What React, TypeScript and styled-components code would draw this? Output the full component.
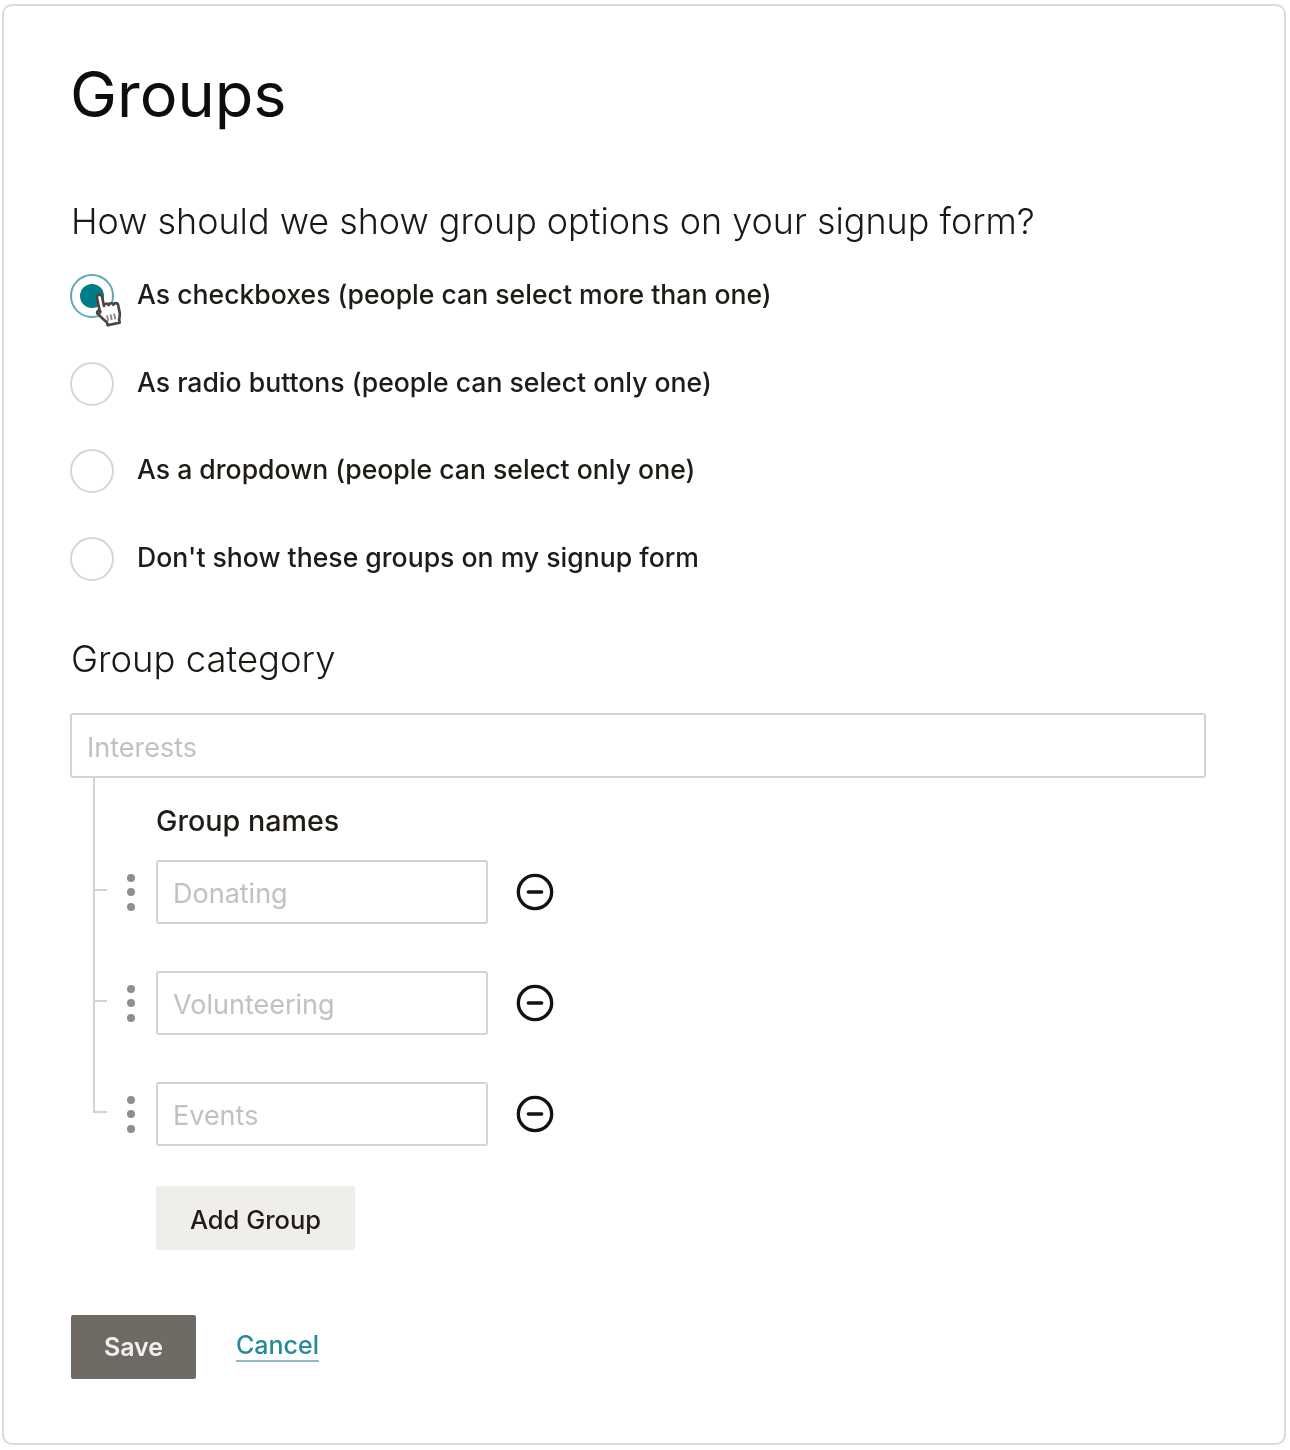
import React from "react";
import styled, { createGlobalStyle } from "styled-components";
import { CircleMinus } from "lucide-react";

const GlobalStyle = createGlobalStyle`
  html, body {
    margin: 0;
    padding: 0;
    background: #fff;
  }
  body {
    font-family: "Inter", "Liberation Sans", sans-serif;
    color: #241c15;
  }
`;

const Card = styled.main`
  box-sizing: border-box;
  width: 1284px;
  height: 1441px;
  margin: 4px 0 0 2px;
  padding: 53px 0 0 66px;
  background: #fff;
  border: 2px solid #dedbd6;
  border-radius: 10px;
  filter: blur(0.6px);
`;

const Title = styled.h1`
  margin: 0 0 70px 0;
  font-size: 63px;
  line-height: 70px;
  font-weight: 400;
  color: #0f0c0a;
`;

const SectionTitle = styled.h2<{ $size: number; $gap: number }>`
  margin: 0 0 ${(p) => p.$gap}px 1px;
  font-size: ${(p) => p.$size}px;
  line-height: 44px;
  font-weight: 300;
  color: #1c1814;
`;

const Options = styled.div`
  display: flex;
  flex-direction: column;
  gap: 43.7px;
  margin-bottom: 56px;
`;

const Option = styled.label`
  display: flex;
  align-items: center;
  gap: 23px;
  height: 44px;
  font-size: 26.6px;
  font-weight: 500;
  color: #1f1b17;
`;

const OptionText = styled.span`
  margin-top: -4px;
`;

const Radio = styled.span<{ $checked?: boolean }>`
  position: relative;
  box-sizing: border-box;
  display: flex;
  align-items: center;
  justify-content: center;
  width: 44px;
  height: 44px;
  border-radius: 50%;
  background: #fff;
  border: 2.5px solid ${(p) => (p.$checked ? "#5fa9b5" : "#d8d6d2")};
`;

const RadioDot = styled.span`
  width: 24px;
  height: 24px;
  border-radius: 50%;
  background: #007c89;
`;

const HandCursor = styled.svg`
  position: absolute;
  left: 23px;
  top: 15px;
  width: 29px;
  height: 37px;
  transform: rotate(-12deg);
`;

const TextInput = styled.input<{ $width: number }>`
  box-sizing: border-box;
  display: block;
  width: ${(p) => p.$width}px;
  height: 64px;
  padding: 3px 15px 0;
  background: #fff;
  border: 2px solid #d5d3cf;
  border-radius: 3px;
  font-family: inherit;
  font-size: 27px;
  &::placeholder {
    color: #c2c1be;
    opacity: 1;
  }
`;

const CategoryInput = styled(TextInput)`
  height: 65px;
`;

const Tree = styled.div`
  margin-left: 23px;
`;

const TreeRow = styled.div<{ $height: number }>`
  display: flex;
  height: ${(p) => p.$height}px;
`;

const Connector = styled.div`
  flex: none;
  display: flex;
  flex-direction: column;
  width: 14px;
`;

const ConnectorTop = styled.span`
  flex: none;
  box-sizing: border-box;
  height: 31px;
  border-left: 2px solid #d5d3cf;
  border-bottom: 2px solid #d5d3cf;
`;

const ConnectorBottom = styled.span<{ $last?: boolean }>`
  flex: 1;
  border-left: 2px solid ${(p) => (p.$last ? "transparent" : "#d5d3cf")};
`;

const ConnectorLine = styled.span`
  flex: 1;
  border-left: 2px solid #d5d3cf;
`;

const GroupNames = styled.h3`
  margin: 24px 0 0 49px;
  font-size: 28.7px;
  line-height: 38px;
  font-weight: 500;
  color: #1f1b17;
`;

const DragHandle = styled.div`
  flex: none;
  display: flex;
  flex-direction: column;
  align-items: center;
  gap: 6.5px;
  width: 49px;
  padding: 13.5px 2px 0 0;
  box-sizing: border-box;
`;

const HandleDot = styled.span`
  width: 8px;
  height: 8px;
  border-radius: 50%;
  background: #8f8e8b;
`;

const RemoveButton = styled.button`
  flex: none;
  display: flex;
  align-items: center;
  justify-content: center;
  height: 64px;
  margin-left: 27px;
  padding: 0;
  border: 0;
  background: none;
  color: #14110e;
`;

const AddGroup = styled.button`
  display: block;
  width: 199px;
  height: 64px;
  margin: 40px 0 65px 86px;
  padding: 2px 0 0;
  border: 0;
  border-radius: 2px;
  background: #efeeea;
  font-family: inherit;
  font-size: 25.5px;
  font-weight: 500;
  color: #1f1b17;
`;

const Actions = styled.div`
  display: flex;
  align-items: center;
  gap: 40px;
  margin-left: 1px;
`;

const SaveButton = styled.button`
  width: 125px;
  height: 64px;
  padding: 0;
  border: 0;
  border-radius: 2px;
  background: #6f6a64;
  font-family: inherit;
  font-size: 25px;
  font-weight: 600;
  color: #f1f0ee;
`;

const CancelLink = styled.a`
  margin-top: -4px;
  font-size: 25px;
  font-weight: 500;
  color: #268b98;
  text-decoration: underline;
  text-underline-offset: 6px;
  text-decoration-thickness: 2px;
  text-decoration-color: #8dbcc4;
`;

const options = [
  "As checkboxes (people can select more than one)",
  "As radio buttons (people can select only one)",
  "As a dropdown (people can select only one)",
  "Don't show these groups on my signup form",
];

const groups = ["Donating", "Volunteering", "Events"];

const App: React.FC = () => (
  <>
    <GlobalStyle />
    <Card>
      <Title>Groups</Title>
      <SectionTitle $size={35.9} $gap={31}>How should we show group options on your signup form?</SectionTitle>
      <Options>
        {options.map((option, i) => (
          <Option key={option}>
            <Radio $checked={i === 0}>
              {i === 0 && <RadioDot />}
              {i === 0 && (
                <HandCursor viewBox="0 0 28 35" aria-hidden="true">
                  <path
                    d="M4.5 4c0-3.4 5-3.4 5 0v9c.5-2.2 4.500-2.2 4.700.2.6-2 4.200-1.700 4.400.6.8-1.800 4.400-1.200 4.400 1v7.200c0 3.500-1 5-2 7v3H9v-3c-2-2.500-4-5.500-7-9.500-1.300-2 1.200-4 3-2.300l-.5 1.300z"
                    fill="#fff"
                    stroke="#4a4743"
                    strokeWidth="2.6"
                    strokeLinejoin="round"
                  />
                  <path d="M10.5 22.5v5.5M14 22.5v5.5M17.5 22.5v5.5" stroke="#8a8680" strokeWidth="1.8" fill="none" />
                </HandCursor>
              )}
            </Radio>
            <OptionText>{option}</OptionText>
          </Option>
        ))}
      </Options>
      <SectionTitle $size={36.4} $gap={32}>Group category</SectionTitle>
      <CategoryInput $width={1136} placeholder="Interests" readOnly />
      <Tree>
        <TreeRow $height={82}>
          <Connector>
            <ConnectorLine />
          </Connector>
          <GroupNames>Group names</GroupNames>
        </TreeRow>
        {groups.map((group, i) => (
          <TreeRow key={group} $height={i === groups.length - 1 ? 64 : 111}>
            <Connector>
              <ConnectorTop />
              <ConnectorBottom $last={i === groups.length - 1} />
            </Connector>
            <DragHandle>
              <HandleDot />
              <HandleDot />
              <HandleDot />
            </DragHandle>
            <TextInput $width={332} placeholder={group} readOnly />
            <RemoveButton type="button" aria-label={`Remove ${group}`}>
              <CircleMinus size={40} strokeWidth={2} />
            </RemoveButton>
          </TreeRow>
        ))}
      </Tree>
      <AddGroup type="button">Add Group</AddGroup>
      <Actions>
        <SaveButton type="button">Save</SaveButton>
        <CancelLink href="#">Cancel</CancelLink>
      </Actions>
    </Card>
  </>
);

export default App;
